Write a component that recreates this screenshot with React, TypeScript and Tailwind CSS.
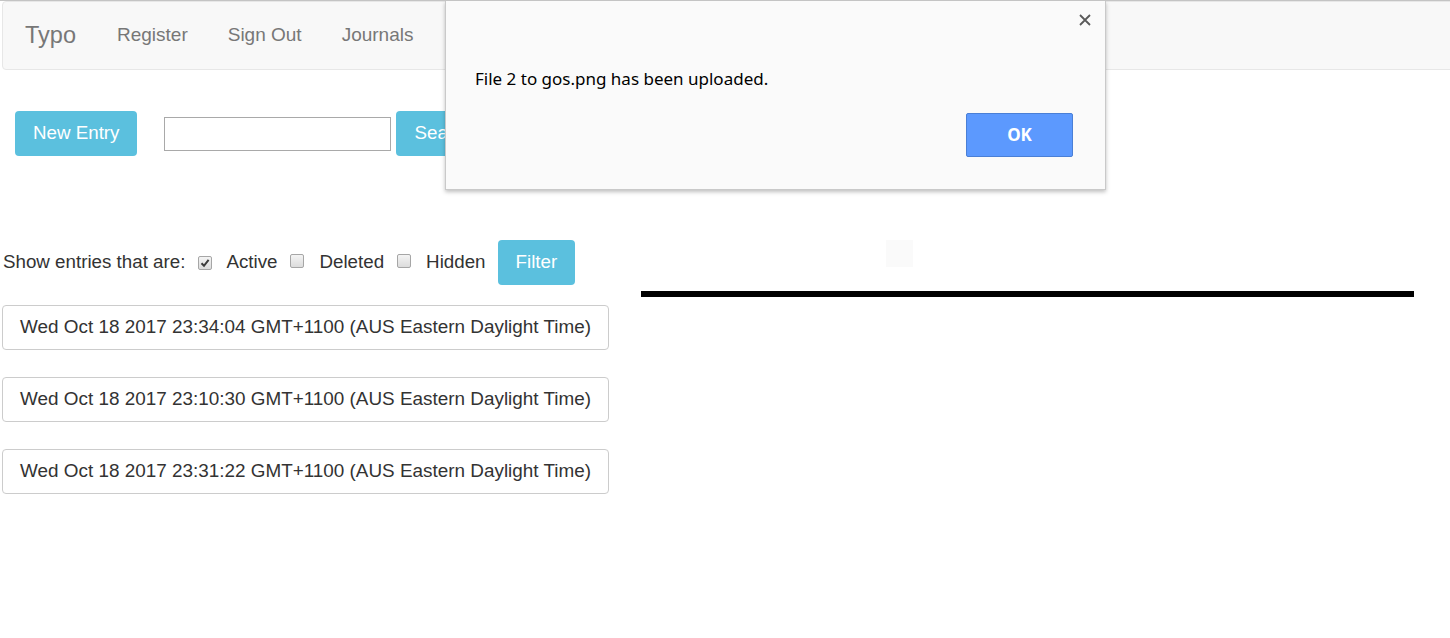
import React from 'react';

const entries = [
  'Wed Oct 18 2017 23:34:04 GMT+1100 (AUS Eastern Daylight Time)',
  'Wed Oct 18 2017 23:10:30 GMT+1100 (AUS Eastern Daylight Time)',
  'Wed Oct 18 2017 23:31:22 GMT+1100 (AUS Eastern Daylight Time)',
];

const Checkbox: React.FC<{ checked?: boolean }> = ({ checked }) => (
  <span className="relative -mt-[4px] inline-flex h-[14px] w-[14px] items-center justify-center rounded-[2px] border border-[#a6a6a6] bg-gradient-to-b from-[#f4f4f4] to-[#dcdcdc]">
    {checked && (
      <svg width="10" height="10" viewBox="0 0 10 10">
        <path d="M1.5 5.2 L4 7.8 L8.6 1.8" fill="none" stroke="#3c3c3c" strokeWidth="2" />
      </svg>
    )}
  </span>
);

export default function App() {
  return (
    <div className="relative h-[638px] w-[1450px] overflow-hidden border-t border-[#c4c4c4] bg-white text-[18.75px] text-[#333] [font-family:'Liberation_Sans',Arial,sans-serif]">
      {/* navbar */}
      <nav className="ml-[2px] flex h-[69px] w-[1470px] items-center rounded-[4px] border border-[#e7e7e7] bg-[#f8f8f8] pl-[22px] text-[19px] text-[#777]">
        <span className="text-[23.5px]">Typo</span>
        <span className="ml-[41px]">Register</span>
        <span className="ml-[40px]">Sign Out</span>
        <span className="ml-[40px]">Journals</span>
      </nav>

      {/* toolbar */}
      <div className="mt-[41px] flex items-center pl-[15px]">
        <button className="h-[45px] rounded-[4px] bg-[#5bc0de] px-[18px] text-white">New Entry</button>
        <input className="ml-[27px] h-[34px] w-[227px] border border-[#a9a9a9] bg-white outline-none" />
        <button className="ml-[5px] h-[45px] rounded-[4px] bg-[#5bc0de] px-[18px] text-white">Search</button>
      </div>

      <div className="mt-[84px] flex">
        {/* left column */}
        <div className="w-[609px] shrink-0 pl-[2px]">
          <div className="flex h-[45px] items-center pl-[1px]">
            <span>Show entries that are:</span>
            <span className="ml-[13px] mr-[14px]"><Checkbox checked /></span>
            <span>Active</span>
            <span className="ml-[13px] mr-[15px]"><Checkbox /></span>
            <span>Deleted</span>
            <span className="ml-[13px] mr-[15px]"><Checkbox /></span>
            <span>Hidden</span>
            <button className="ml-[12px] h-[45px] rounded-[4px] bg-[#5bc0de] px-[18px] text-white">Filter</button>
          </div>
          <div className="mt-[20px] flex flex-col items-start gap-[27px]">
            {entries.map((e, i) => (
              <div key={i} className="flex h-[45px] items-center whitespace-nowrap rounded-[4px] border border-[#cccccc] px-[17px] text-[18.9px]">
                {e}
              </div>
            ))}
          </div>
        </div>

        {/* right column */}
        <div className="ml-[32px] w-[773px]">
          <div className="ml-[245px] h-[27px] w-[27px] bg-[#fafafa]" />
          <div className="mt-[24px] h-[6px] w-[773px] bg-black" />
        </div>
      </div>

      {/* alert dialog */}
      <div className="absolute left-[445px] top-0 h-[189px] w-[661px] border border-t-0 border-[#c9c9c9] bg-[#fafafa] shadow-[0_2px_4px_rgba(0,0,0,0.25)] [font-family:'Noto_Sans',sans-serif]">
        <div className="flex justify-end pr-[14px] pt-[13px]">
          <svg width="12" height="12" viewBox="0 0 12 12">
            <path d="M1 1 L11 11 M11 1 L1 11" stroke="#5a5a5a" strokeWidth="1.8" />
          </svg>
        </div>
        <p className="ml-[29px] mt-[42px] text-[17px] leading-[22px] text-black">File 2 to gos.png has been uploaded.</p>
        <div className="mt-[23px] flex justify-end pr-[32px]">
          <button className="h-[44px] w-[107px] rounded-[2px] border border-[#4a7fd6] bg-[#5c99fe] text-[17px] font-bold text-white">OK</button>
        </div>
      </div>
    </div>
  );
}
